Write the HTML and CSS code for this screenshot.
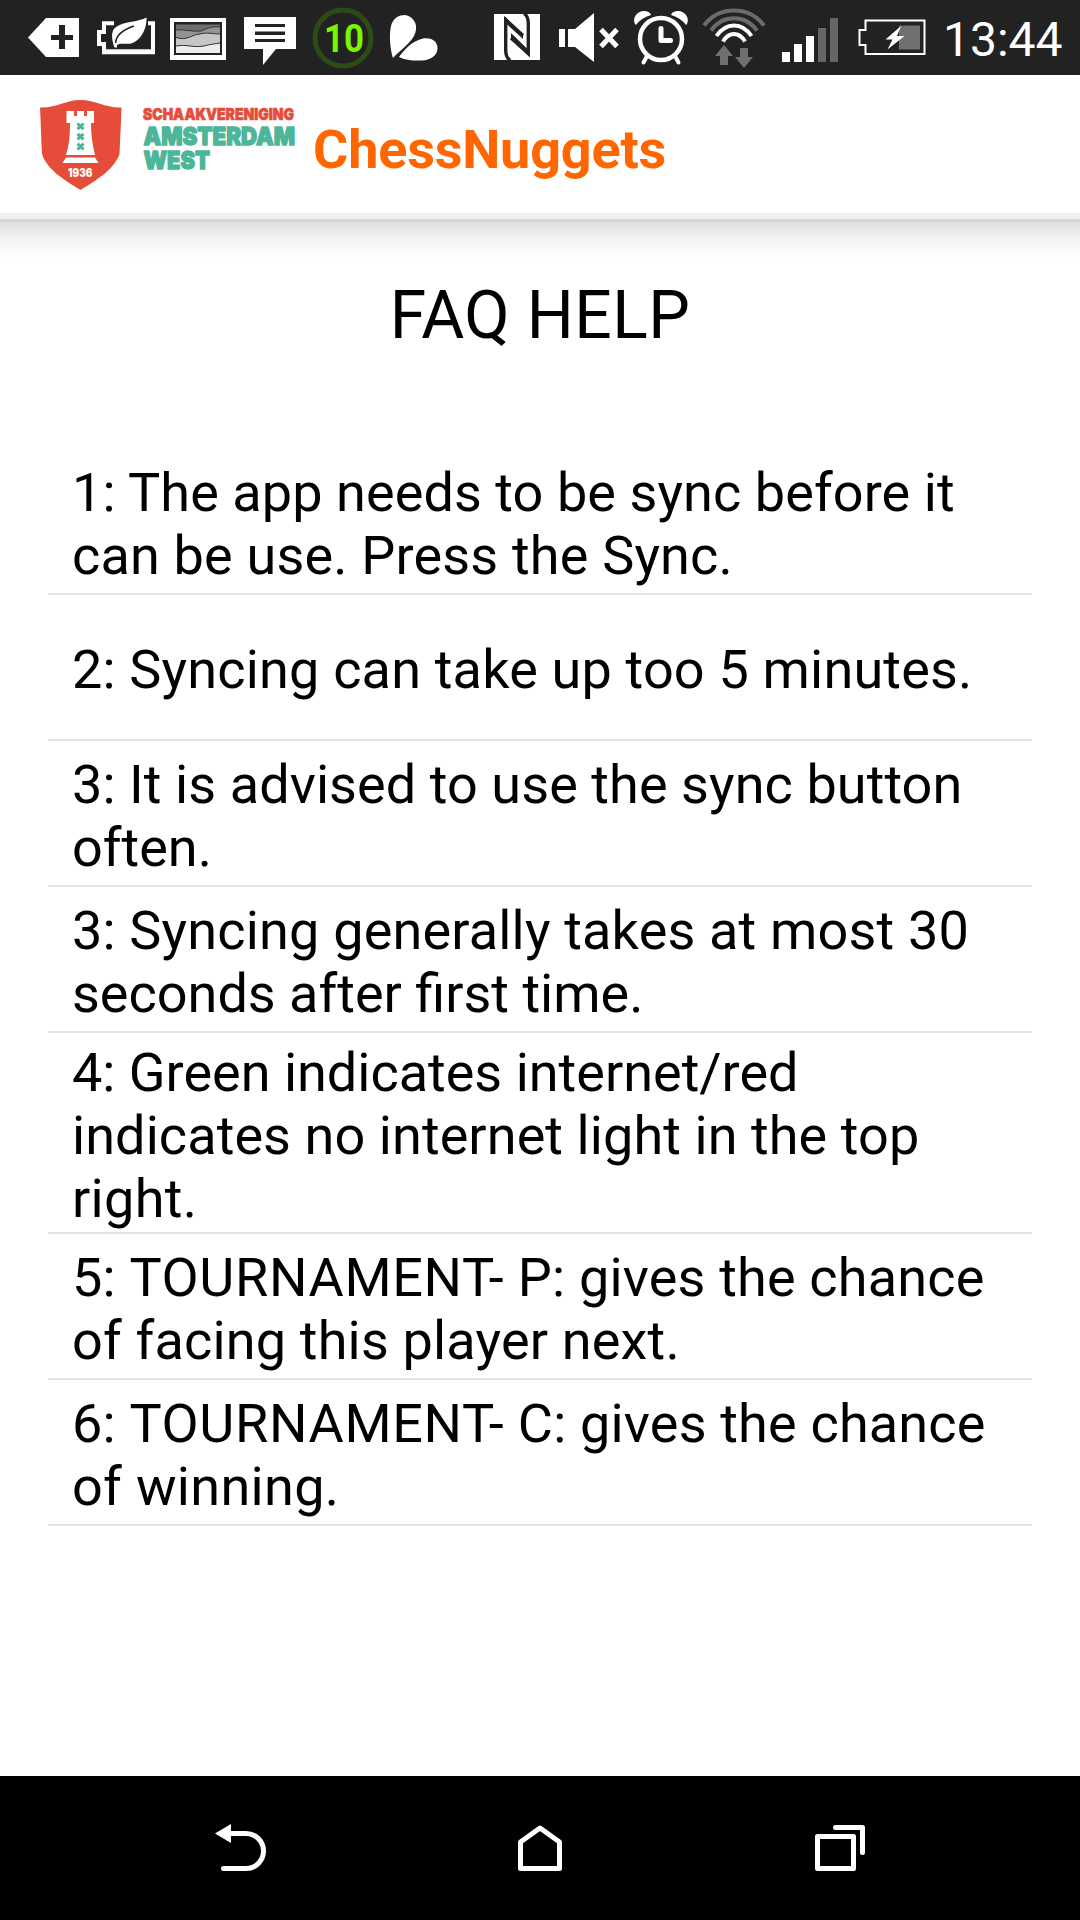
FILE: index.html
```html
<!DOCTYPE html>
<html lang="en">
<head>
<meta charset="utf-8">
<title>ChessNuggets</title>
<link rel="stylesheet" href="styles.css">
</head>
<body>
<div class="status">
  <svg class="ico" width="430" height="75" viewBox="20 0 430 75">
    <!-- tag with plus -->
    <path class="w" d="M28 37.500 46 18H79V57H46Z"/>
    <path class="k" d="M59 25h6v10h8v5h-8v9h-6v-9h-8v-5h8z"/>
    <!-- battery saver leaf -->
    <path class="line" stroke-width="4" d="M114 23.300H104V32H99V44H104V52.200H153V23.300H148"/>
    <path class="line" stroke-width="1.500" d="M104 50H153"/>
    <path class="w" d="M146.500 17.500C147 28 141 41 131 43.500C125 44.500 120 42.500 117 45L117 47.500H114.500C112 41 110 31 116 27C125 21 139 22 146.500 17.500Z"/>
    <path fill="none" stroke="#222" stroke-width="1.600" d="M115.500 43C116 36 122 30 134 26"/>
    <!-- picture -->
    <path class="w" d="M170 18H226V60H170Z"/>
    <path class="k" d="M174 22H222V55H174Z"/>
    <path fill="#6e6e6e" d="M176 24.500H220V53H176Z"/>
    <path fill="#929292" d="M176 30C185 29 193 32 201 31C208 28 213 26 220 27V53H176Z"/>
    <path fill="#c6c6c6" d="M176 37.500C188 41 190 35 200 34C208 32 212 34 220 34V53H176Z"/>
    <path fill="#ececec" d="M176 46C188 44 192 48 204 46C211 44 215 44 220 43V53H176Z"/>
    <g fill="none" stroke="#333" stroke-width="1"><path d="M176 30C185 29 193 32 201 31C208 28 213 26 220 27"/><path d="M176 37.500C188 41 190 35 200 34C208 32 212 34 220 34"/><path d="M176 46C188 44 192 48 204 46C211 44 215 44 220 43"/></g>
    <!-- message -->
    <path class="w" d="M244 17H296V49H276L263 65V49H244Z"/>
    <path class="k" d="M255 24h30v3h-30zM255 31.500h30v3.500h-30zM255 39h30v3h-30z"/>
    <!-- battery percentage -->
    <circle cx="343" cy="38" r="28" fill="none" stroke="#2d4b16" stroke-width="5"/>
    <text class="pct" x="324" y="52" textLength="40" lengthAdjust="spacingAndGlyphs">10</text>
    <!-- petals -->
    <path class="w" d="M393 58C390 49 389 35 391 26C393 18 399 15 405 15C413 16 418 24 415.500 32C413 42 400 50 393 58Z"/>
    <path class="w" d="M399 57C404 50 412 41 423 38.500C432 37 438 42 437.500 49C437 56 430 60 422 60.500C413 61 405 60 399 57Z"/>
  </svg>
  <svg class="ico right" width="450" height="75" viewBox="490 0 450 75">
    <!-- nfc -->
    <path class="w" d="M494 14H540V60H494Z"/>
    <g fill="none" stroke="#222" stroke-width="3.400"><path d="M510 60.500C507 58 505.700 56 505.700 50V20L523 35.500"/><path d="M524 13.500C527 15 528.300 18 528.300 24V53.500L511 38"/></g>
    <path d="M504.500 16 523 34V39L504.500 22ZM511 33V39L529.500 57V51Z" class="k"/>
    <!-- muted speaker -->
    <path class="w" d="M559 29h6v18h-6zM568 29H575L594 13V62L575 47H568Z"/>
    <path class="line" stroke-width="5" d="M601 29.500 617 46.500M617 29.500 601 46.500"/>
    <!-- alarm clock -->
    <circle class="line" cx="661" cy="39" r="21" stroke-width="4.500"/>
    <path class="line" stroke-width="5" stroke-linecap="round" stroke-linejoin="round" d="M661 28.500V40.500H670.500"/>
    <path class="line" stroke-width="4" stroke-linecap="round" d="M647 56 643.500 62.500M675 56 678.500 62.500"/>
    <path class="w" d="M635 24C631 16 641 7 650 13L651 15Q641 18 636 25ZM687 24C691 16 681 7 672 13L671 15Q681 18 686 25Z"/>
    <!-- wifi with traffic arrows -->
    <g fill="none" stroke-width="4"><path stroke="#6b6b6b" d="M704 25.500C719 5.500 749 5.500 764 25.500M711 30.500C723 14 745 14 757 30.500"/><path stroke="#fff" d="M716.500 36C726 22 742 22 751.500 36M723 41.500C729 31.500 739 31.500 745 41.500"/></g>
    <path fill="#707070" d="M724 45 733 56H728V65H720V56H715ZM740 48H748V57H753L744 68L735 57H740Z"/>
    <!-- mobile signal -->
    <path class="w" d="M782 52h8v10h-8zM794 44h8v18h-8zM806 36h8v26h-8z"/>
    <path fill="#666" d="M818 28h8v34h-8zM830 18h8v44h-8z"/>
    <!-- charging battery -->
    <path fill="#707070" d="M899 25.500H920V49.500H899Z"/>
    <path class="line" stroke-width="2" d="M865.500 20.500H924.500V54H865.500V45H859.500V30H865.500Z"/>
    <path class="w" d="M901 26 885.500 39.500H892.500L887.500 49.500 904.500 36H897Z"/>
  </svg>
  <span class="clock">13:44</span>
</div>

<header class="bar">
  <svg class="logo" width="265" height="100" viewBox="35 90 265 100">
    <path fill="#e54d3a" d="M40 107.500C57 108 65 100 80.500 100C96 100 105 108 121.500 107.500C121 125 120 140 119.500 154C114 170 95 181 80.500 190C66 181 47 170 42 154C41 140 41 125 40 107.500Z"/>
    <path fill="#fff" d="M66.500 111H74V116H77V111H84V116H87V111H94V123H91C91 136 93 146 95 155H66C69 146 70 136 70 123H66.500ZM66 157.500H95L98.500 163H62.500Z"/>
    <path fill="none" stroke="#4db598" stroke-width="3" d="m77.500 123.500 6 5.600m0-5.600-6 5.600m0 4.700 6 5.600m0-5.600-6 5.600m0 4.300 6 5.600m0-5.600-6 5.600"/>
    <text class="year" x="68" y="176.500" textLength="24.500" lengthAdjust="spacingAndGlyphs">1936</text>
    <text class="club" x="143" y="120" textLength="151" lengthAdjust="spacingAndGlyphs">SCHAAKVERENIGING</text>
    <text class="city" x="143.500" y="144.500" textLength="151.500" lengthAdjust="spacingAndGlyphs">AMSTERDAM</text>
    <text class="city" x="143.500" y="169" textLength="66.500" lengthAdjust="spacingAndGlyphs">WEST</text>
  </svg>
  <h1 class="title">ChessNuggets</h1>
</header>
<div class="shadow"></div>

<main class="page">
  <h2 class="heading">FAQ HELP</h2>
  <ul class="faq">
    <li><span class="s1">1: The app needs to be sync before it</span><span class="s2">can be use. Press the Sync.</span></li>
    <li class="single"><span class="s2">2: Syncing can take up too 5 minutes.</span></li>
    <li><span class="s1">3: It is advised to use the sync button</span><span>often.</span></li>
    <li><span class="s2">3: Syncing generally takes at most 30</span><span>seconds after first time.</span></li>
    <li><span>4: Green indicates internet/red</span><span class="s1">indicates no internet light in the top</span><span class="s3">right.</span></li>
    <li><span class="s2">5: <b>TOURNAMENT-</b> P: gives the chance</span><span class="s2">of facing this player next.</span></li>
    <li><span class="s2">6: <b>TOURNAMENT-</b> C: gives the chance</span><span class="s3">of winning.</span></li>
  </ul>
</main>

<nav class="nav">
  <svg width="52" height="48" viewBox="215 1824 52 48"><path fill="#fff" d="M215 1833.500 231 1824V1843Z"/><path class="line" stroke-width="5" d="M230 1833.500H246A17.500 17.500 0 0 1 246 1868.500H223.500" stroke-linecap="round"/></svg>
  <svg class="home" width="44" height="48" viewBox="518 1824 44 48"><path class="line" stroke-width="5" stroke-linejoin="round" d="M520.500 1868.500V1842L540 1828 559.500 1842V1868.500Z"/></svg>
  <svg width="50" height="48" viewBox="815 1824 50 48"><path class="line" stroke-width="5" stroke-linejoin="round" stroke-linecap="round" d="M817.500 1836.500H853.500V1868.500H817.500ZM835.500 1827.500H862.500V1852.500"/></svg>
</nav>
</body>
</html>
```
FILE: styles.css
```css
* { box-sizing: border-box; }
body {
  margin: 0;
  width: 1080px;
  height: 1920px;
  display: flex;
  flex-direction: column;
  background: #fff;
  color: #000;
  font-family: Roboto, "Noto Sans", sans-serif;
  overflow: hidden;
}
svg { display: block; flex: none; }
.w { fill: #fff; }
.k { fill: #222; }
.line { fill: none; stroke: #fff; }

.status {
  height: 75px;
  flex: none;
  display: flex;
  background: #222;
  padding-left: 20px;
}
.right { margin-left: 40px; }
.clock {
  padding-left: 3px;
  color: #fff;
  font-size: 48px;
  line-height: 79px;
  white-space: nowrap;
}
.pct { font-size: 39px; font-weight: 700; fill: #7cf500; }

.bar {
  height: 147px;
  flex: none;
  display: flex;
  align-items: flex-start;
  padding: 15px 0 0 35px;
  border-bottom: 3px solid #d4d4d4;
  box-shadow: inset 0 -6px #f0f0f0;
}
.logo text {
  font-family: Inter, sans-serif;
  font-weight: 900;
  stroke-linejoin: round;
}
.year { font-size: 11.500px; fill: #fff; }
.club { font-size: 16.500px; fill: #e54d3a; stroke: #e54d3a; stroke-width: .7px; }
.city { font-size: 25px; fill: #4db598; stroke: #4db598; stroke-width: 1.300px; }
.title {
  margin: 28px 0 0 13px;
  font-size: 54px;
  line-height: 64px;
  font-weight: 700;
  letter-spacing: -.2px;
  color: #f60;
}
.shadow {
  height: 36px;
  flex: none;
  background: linear-gradient(#dedede, #f2f2f2 45%, #fff);
}

.page { flex: 1; padding: 19px 48px 0; }
.heading {
  margin: 0;
  height: 172px;
  text-align: center;
  font-size: 66px;
  line-height: 78px;
  font-weight: 400;
  letter-spacing: .4px;
}
.faq { list-style: none; margin: 0; padding: 0; }
.faq li {
  min-height: 146px;
  display: flex;
  flex-direction: column;
  justify-content: center;
  padding: 8px 24px 2px;
  border-bottom: 2px solid #e4e4e4;
  font-size: 54px;
  line-height: 63px;
  white-space: nowrap;
}
.faq .single { padding: 7px 24px 3px; }
.faq b { font-weight: 400; letter-spacing: .65px; }
.s1 { letter-spacing: .08px; }
.s2 { letter-spacing: .18px; }
.s3 { letter-spacing: .32px; }

.nav {
  height: 144px;
  flex: none;
  display: flex;
  padding: 48px 215px 0;
  background: #000;
}
.home { margin: 0 253px 0 251px; }
```
